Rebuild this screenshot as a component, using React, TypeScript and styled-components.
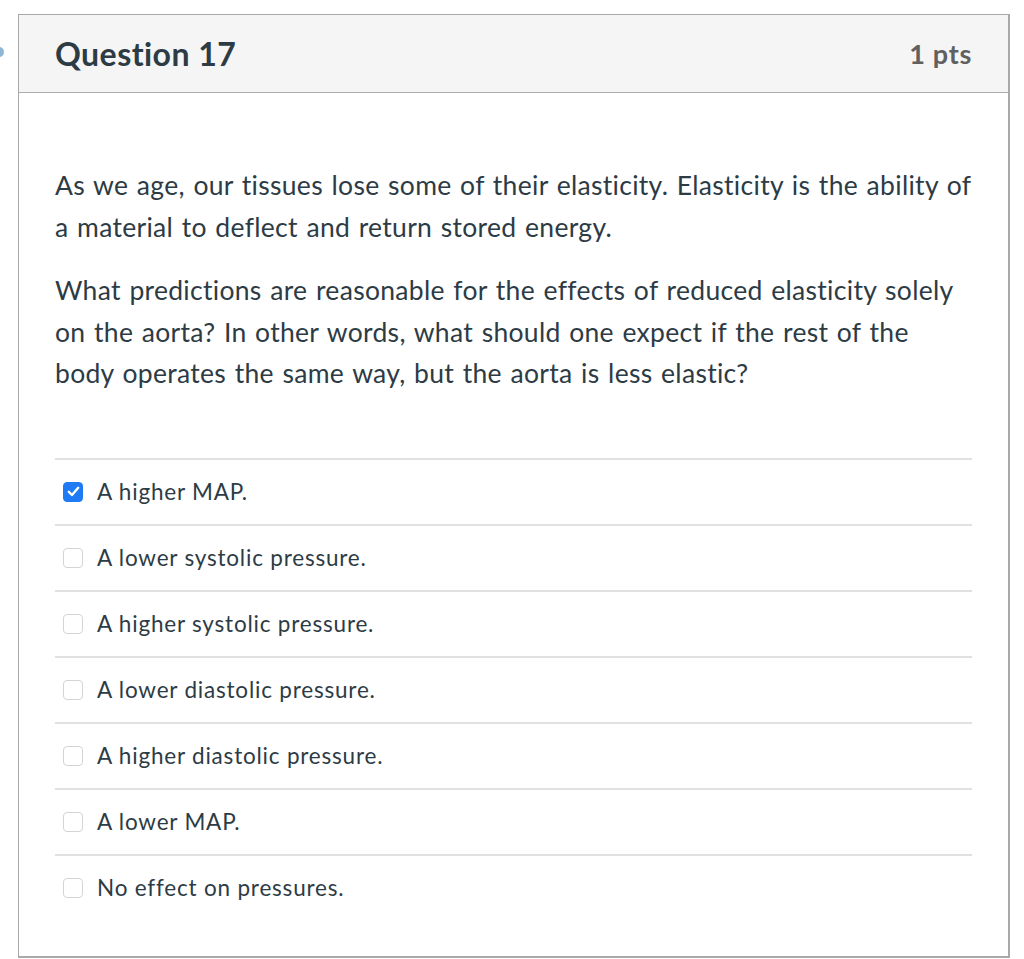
import React from "react";
import styled, { createGlobalStyle } from "styled-components";

const GlobalStyle = createGlobalStyle`
  html, body {
    margin: 0;
    padding: 0;
    background: #ffffff;
    font-family: Lato, "Open Sans", sans-serif;
  }
`;

const Page = styled.div`
  position: relative;
  padding: 14px 0 0 18px;
`;

const EdgeMarker = styled.span`
  position: absolute;
  left: -5px;
  top: 47px;
  width: 9px;
  height: 10px;
  border-radius: 50%;
  background: #8fb6d6;
`;

const Card = styled.section`
  width: 989px;
  height: 941px;
  border: 1px solid #a9a9a9;
  border-right-width: 2px;
  border-bottom-width: 2px;
  box-sizing: content-box;
  display: flex;
  flex-direction: column;
`;

const Header = styled.header`
  height: 77px;
  background: #f5f5f5;
  border-bottom: 1px solid #acacac;
  display: flex;
  align-items: center;
  justify-content: space-between;
  padding: 0 36px;
`;

const Title = styled.h2`
  margin: 0;
  font-size: 32px;
  font-weight: 700;
  color: #2d3b45;
  letter-spacing: 0.45px;
`;

const Points = styled.span`
  font-size: 27px;
  font-weight: 700;
  color: #606060;
  letter-spacing: 0.7px;
`;

const Body = styled.div`
  padding: 72px 36px 0 36px;
`;

const Paragraph = styled.p`
  margin: 0 0 22px;
  font-size: 26.5px;
  line-height: 41.5px;
  letter-spacing: 0.3px;
  word-spacing: 1.5px;
  color: #2d3b45;
`;

const AnswerList = styled.ul`
  list-style: none;
  margin: 63px 0 0;
  padding: 0;
`;

const Row = styled.li`
  height: 64px;
  border-top: 2px solid #e1e1e1;
  display: flex;
  align-items: center;
  padding-left: 8px;
  gap: 14px;
  font-size: 22.5px;
  letter-spacing: 0.8px;
  color: #2d3b45;
`;

const Box = styled.span<{ $checked?: boolean }>`
  width: 20px;
  height: 20px;
  box-sizing: border-box;
  border-radius: 4px;
  border: 1px solid ${(p) => (p.$checked ? "#1e7bf4" : "#d4d4d4")};
  background: ${(p) => (p.$checked ? "#1e7bf4" : "#ffffff")};
  display: flex;
  align-items: center;
  justify-content: center;
  flex: none;
`;

const answers = [
  { text: "A higher MAP.", checked: true },
  { text: "A lower systolic pressure.", checked: false },
  { text: "A higher systolic pressure.", checked: false },
  { text: "A lower diastolic pressure.", checked: false },
  { text: "A higher diastolic pressure.", checked: false },
  { text: "A lower MAP.", checked: false },
  { text: "No effect on pressures.", checked: false },
];

export default function App() {
  return (
    <>
      <GlobalStyle />
      <Page>
        <EdgeMarker />
        <Card>
          <Header>
            <Title>Question 17</Title>
            <Points>1 pts</Points>
          </Header>
          <Body>
            <Paragraph>
              As we age, our tissues lose some of their elasticity. Elasticity is the ability of a
              material to deflect and return stored energy.
            </Paragraph>
            <Paragraph>
              What predictions are reasonable for the effects of reduced elasticity solely on the
              aorta? In other words, what should one expect if the rest of the body operates the
              same way, but the aorta is less elastic?
            </Paragraph>
            <AnswerList>
              {answers.map((a) => (
                <Row key={a.text}>
                  <Box $checked={a.checked}>
                    {a.checked && (
                      <svg width="13" height="11" viewBox="0 0 13 11">
                        <path
                          d="M1.8 5.8 L5 9 L11.2 1.8"
                          fill="none"
                          stroke="#fff"
                          strokeWidth="2.4"
                          strokeLinecap="round"
                          strokeLinejoin="round"
                        />
                      </svg>
                    )}
                  </Box>
                  {a.text}
                </Row>
              ))}
            </AnswerList>
          </Body>
        </Card>
      </Page>
    </>
  );
}
